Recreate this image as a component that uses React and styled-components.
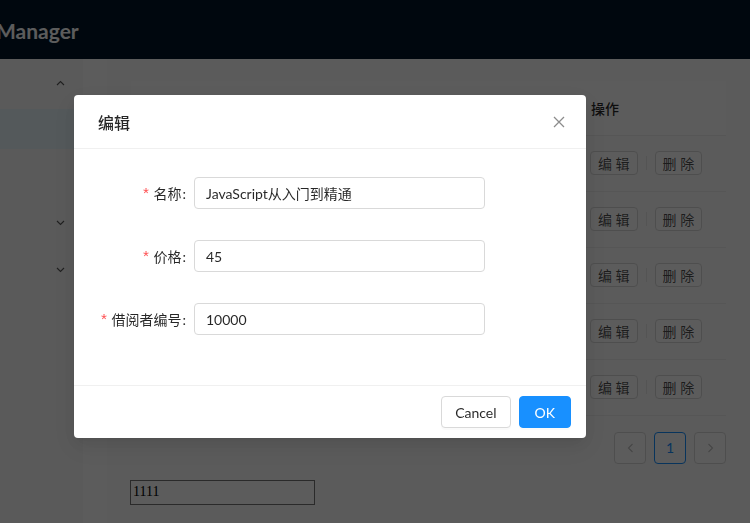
import React from "react";
import styled, { createGlobalStyle } from "styled-components";

const GlobalStyle = createGlobalStyle`
  html, body {
    margin: 0;
    padding: 0;
    overflow: hidden;
  }
  body {
    font-family: Lato, "Noto Sans CJK SC", sans-serif;
    font-size: 14px;
    color: rgba(0, 0, 0, 0.85);
  }
  * {
    box-sizing: border-box;
  }
`;

const Page = styled.div`
  width: 750px;
  height: 523px;
  display: flex;
  flex-direction: column;
  overflow: hidden;
  background: #f8f8f8;
`;

const Header = styled.header`
  height: 59px;
  flex: none;
  background: #001529;
  display: flex;
  align-items: center;
  overflow: hidden;
`;

const Logo = styled.div`
  margin-left: -4px;
  margin-top: 1px;
  color: #ffffff;
  font-size: 21px;
  font-weight: 700;
  white-space: nowrap;
`;

const Body = styled.div`
  flex: 1;
  display: flex;
  min-height: 0;
`;

const Sider = styled.aside`
  width: 83px;
  flex: none;
  background: #f8f8f8;
  padding-top: 4px;
`;

const MenuRow = styled.div`
  height: 40px;
  margin: ${(p) => (p.$first ? "0 0 6px" : "0 0 7px")};
  display: flex;
  align-items: center;
  justify-content: flex-end;
  padding-right: 18px;
  background: ${(p) => (p.$selected ? "#e9f6fd" : "transparent")};
  color: rgba(0, 0, 0, 0.65);
`;

const Main = styled.main`
  flex: 1;
  display: flex;
  padding-left: 24px;
  background: #ffffff;
`;

const Card = styled.section`
  flex: 1;
  background: #fbfbfb;
  padding: 22px 24px 0;
`;

const Table = styled.table`
  width: 100%;
  border-collapse: collapse;
  table-layout: fixed;
`;

const Th = styled.th`
  height: 54px;
  padding: 0 16px;
  text-align: left;
  font-weight: 500;
  background: #ffffff;
  border-bottom: 1px solid #eeeeee;
  color: rgba(0, 0, 0, 0.85);
  width: ${(p) => p.$width || "auto"};
`;

const Td = styled.td`
  height: 56px;
  padding: 0 15px;
  border-bottom: 1px solid #eeeeee;
  color: rgba(0, 0, 0, 0.65);
`;

const Actions = styled.div`
  display: flex;
  align-items: center;
`;

const SmallButton = styled.button`
  height: 24px;
  padding: 0 7px;
  font: inherit;
  font-size: 14px;
  color: rgba(0, 0, 0, 0.7);
  background: #ffffff;
  border: 1px solid #d9d9d9;
  border-radius: 4px;
`;

const VDivider = styled.span`
  width: 1px;
  height: 14px;
  margin: 0 8px;
  background: #e8e8e8;
`;

const Pager = styled.ul`
  list-style: none;
  margin: 16px 0;
  padding: 0;
  display: flex;
  justify-content: flex-end;
  gap: 8px;
`;

const PageItem = styled.li`
  width: 32px;
  height: 32px;
  display: flex;
  align-items: center;
  justify-content: center;
  border: 1px solid ${(p) => (p.$active ? "#1890ff" : "#d9d9d9")};
  border-radius: 4px;
  background: #ffffff;
  color: ${(p) => (p.$active ? "#1890ff" : "rgba(0, 0, 0, 0.25)")};
  font-size: 14px;
`;

const RawInput = styled.input`
  width: 185px;
  height: 25px;
  margin-left: -1px;
  padding: 1px 2px;
  font-family: "Liberation Serif", serif;
  font-size: 14px;
  color: #000;
  border: 1px solid #767676;
  border-radius: 0;
  background: #ffffff;
`;

const Mask = styled.div`
  position: fixed;
  inset: 0;
  background: rgba(0, 0, 0, 0.64);
`;

const Modal = styled.div`
  position: fixed;
  left: 74px;
  top: 95px;
  width: 512px;
  background: #ffffff;
  border-radius: 4px;
  box-shadow: 0 3px 6px -4px rgba(0, 0, 0, 0.12), 0 6px 16px rgba(0, 0, 0, 0.08),
    0 9px 28px 8px rgba(0, 0, 0, 0.05);
  display: flex;
  flex-direction: column;
`;

const ModalHeader = styled.div`
  height: 54px;
  padding: 0 24px;
  display: flex;
  align-items: center;
  justify-content: space-between;
  border-bottom: 1px solid #f0f0f0;
`;

const ModalTitle = styled.div`
  font-size: 16px;
  font-weight: 500;
  color: rgba(0, 0, 0, 0.85);
`;

const CloseButton = styled.button`
  width: 22px;
  height: 22px;
  margin-right: -8px;
  padding: 0;
  border: none;
  background: transparent;
  display: flex;
  align-items: center;
  justify-content: center;
  color: rgba(0, 0, 0, 0.45);
`;

const ModalBody = styled.div`
  padding: 28px 24px 24px;
  display: flex;
  flex-direction: column;
  gap: 31px;
  height: 236px;
`;

const FormItem = styled.div`
  display: flex;
  align-items: center;
`;

const Label = styled.label`
  width: 96px;
  flex: none;
  text-align: right;
  white-space: nowrap;
  color: rgba(0, 0, 0, 0.85);

  &::before {
    content: "*";
    display: inline-block;
    margin-right: 3px;
    color: #ff4d4f;
    font-family: "Liberation Mono", monospace;
    font-size: 15px;
  }

  &::after {
    content: ":";
    margin: 0 8px 0 1px;
  }
`;

const TextInput = styled.input`
  width: 291px;
  height: 32px;
  padding: 4px 11px;
  font: inherit;
  font-size: 14px;
  color: rgba(0, 0, 0, 0.85);
  border: 1px solid #d9d9d9;
  border-radius: 4px;
  background: #ffffff;
  outline: none;
`;

const ModalFooter = styled.div`
  padding: 10px 15px 10px 16px;
  border-top: 1px solid #f0f0f0;
  display: flex;
  justify-content: flex-end;
  gap: 8px;
`;

const Button = styled.button`
  height: 32px;
  padding: 0 ${(p) => (p.$primary ? "15px" : "13px")};
  font: inherit;
  font-size: 14px;
  border-radius: 4px;
  border: 1px solid ${(p) => (p.$primary ? "#1890ff" : "#d9d9d9")};
  background: ${(p) => (p.$primary ? "#1890ff" : "#ffffff")};
  color: ${(p) => (p.$primary ? "#ffffff" : "rgba(0, 0, 0, 0.85)")};
  box-shadow: 0 2px 0 rgba(0, 0, 0, 0.02);
`;

const Chevron = ({ up }) => (
  <svg width="9" height="6" viewBox="0 0 9 6" fill="none">
    <path
      d={up ? "M1 5 L4.5 1.5 L8 5" : "M1 1 L4.5 4.5 L8 1"}
      stroke="currentColor"
      strokeWidth="1.1"
    />
  </svg>
);

const Arrow = ({ left }) => (
  <svg width="7" height="10" viewBox="0 0 7 10" fill="none">
    <path
      d={left ? "M5.5 1 L1.5 5 L5.5 9" : "M1.5 1 L5.5 5 L1.5 9"}
      stroke="currentColor"
      strokeWidth="1.1"
    />
  </svg>
);

const books = [
  { id: 1, name: "JavaScript从入门到精通", price: 45, reader: 10000 },
  { id: 2, name: "深入浅出Node.js", price: 69, reader: 10001 },
  { id: 3, name: "CSS权威指南", price: 89, reader: 10002 },
  { id: 4, name: "React实战", price: 59, reader: 10003 },
  { id: 5, name: "算法导论", price: 128, reader: 10004 },
];

export default function App() {
  return (
    <>
      <GlobalStyle />
      <Page>
        <Header>
          <Logo>Manager</Logo>
        </Header>
        <Body>
          <Sider>
            <MenuRow $first>
              <Chevron up />
            </MenuRow>
            <MenuRow $selected />
            <MenuRow />
            <MenuRow>
              <Chevron />
            </MenuRow>
            <MenuRow>
              <Chevron />
            </MenuRow>
          </Sider>
          <Main>
            <Card>
              <Table>
                <thead>
                  <tr>
                    <Th $width="60px">编号</Th>
                    <Th>名称</Th>
                    <Th $width="80px">价格</Th>
                    <Th $width="110px">借阅者编号</Th>
                    <Th $width="151px">操作</Th>
                  </tr>
                </thead>
                <tbody>
                  {books.map((b) => (
                    <tr key={b.id}>
                      <Td>{b.id}</Td>
                      <Td>{b.name}</Td>
                      <Td>{b.price}</Td>
                      <Td>{b.reader}</Td>
                      <Td>
                        <Actions>
                          <SmallButton>编 辑</SmallButton>
                          <VDivider />
                          <SmallButton>删 除</SmallButton>
                        </Actions>
                      </Td>
                    </tr>
                  ))}
                </tbody>
              </Table>
              <Pager>
                <PageItem>
                  <Arrow left />
                </PageItem>
                <PageItem $active>1</PageItem>
                <PageItem>
                  <Arrow />
                </PageItem>
              </Pager>
              <RawInput defaultValue="1111" />
            </Card>
          </Main>
        </Body>
      </Page>
      <Mask />
      <Modal>
        <ModalHeader>
          <ModalTitle>编辑</ModalTitle>
          <CloseButton aria-label="close">
            <svg width="12" height="12" viewBox="0 0 12 12">
              <path d="M1 1 L11 11 M11 1 L1 11" stroke="currentColor" strokeWidth="1.3" />
            </svg>
          </CloseButton>
        </ModalHeader>
        <ModalBody>
          <FormItem>
            <Label>名称</Label>
            <TextInput defaultValue="JavaScript从入门到精通" />
          </FormItem>
          <FormItem>
            <Label>价格</Label>
            <TextInput defaultValue="45" />
          </FormItem>
          <FormItem>
            <Label>借阅者编号</Label>
            <TextInput defaultValue="10000" />
          </FormItem>
        </ModalBody>
        <ModalFooter>
          <Button>Cancel</Button>
          <Button $primary>OK</Button>
        </ModalFooter>
      </Modal>
    </>
  );
}
